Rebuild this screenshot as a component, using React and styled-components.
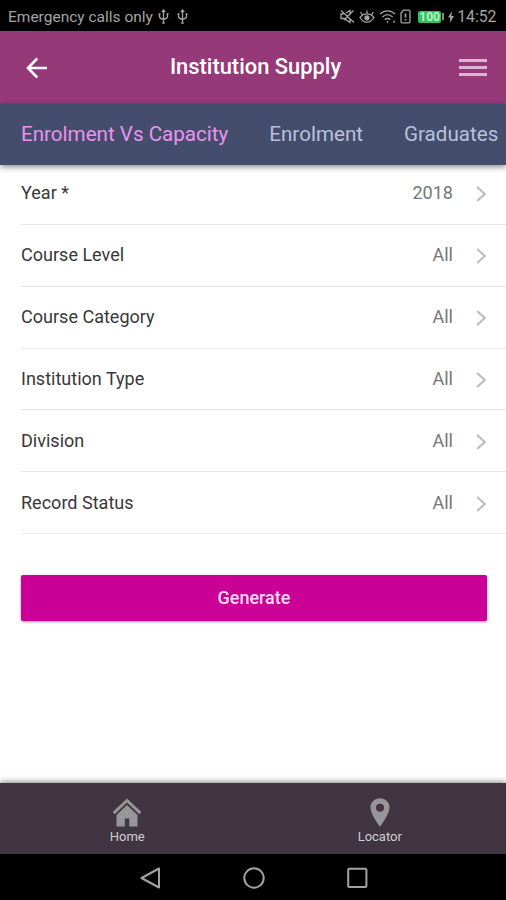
import React from "react";
import styled, { createGlobalStyle } from "styled-components";

const FILTERS = [
  { label: "Year *", value: "2018" },
  { label: "Course Level", value: "All" },
  { label: "Course Category", value: "All" },
  { label: "Institution Type", value: "All" },
  { label: "Division", value: "All" },
  { label: "Record Status", value: "All" },
];

const TABS = ["Enrolment Vs Capacity", "Enrolment", "Graduates"];

const UsbIcon = () => (
  <StatusSvg width="11" height="16" viewBox="0 0 11 16">
    <path d="M5.5 1v13M3.8 3l1.7-2 1.7 2M1.5 4.5v3.2c0 1.4 1.2 2 4 2.6 2.8-.6 4-1.2 4-2.6V4.5M.5 5h2M8.5 5h2M4.3 14h2.4" />
  </StatusSvg>
);

const MuteIcon = () => (
  <StatusSvg width="15" height="15" viewBox="0 0 15 15">
    <path d="M3.5 5H1v4.5h3L10 13.5V10M6 4l4-2.500V6M1 1.5L14 13.5M13.5 1.5L4 11" />
  </StatusSvg>
);

const EyeIcon = () => (
  <StatusSvg width="16" height="15" viewBox="0 0 16 15">
    <path d="M1 8.5C3 5.8 5.5 4.8 8 4.8s5 1 7 3.7c-2 3.2-4.5 4.7-7 4.7s-5-1.5-7-4.700zM8 1.5v3M1.5 3l2 3M14.5 3l-2 3" />
    <circle cx="8" cy="8.8" r="2" fill="#a4a4a4" />
  </StatusSvg>
);

const WifiIcon = () => (
  <StatusSvg width="17" height="15" viewBox="0 0 17 15">
    <path d="M1 5c4.5-4.3 10.5-4.3 15 0M3.3 8c3.2-3 7.2-3 10.4 0M5.7 10.700c1.7-1.5 3.9-1.5 5.6 0M8.5 12v2M15 11.5v2.500" />
  </StatusSvg>
);

const SimIcon = () => (
  <StatusSvg width="11" height="15" viewBox="0 0 11 15">
    <path d="M3.5 1.2H9c.6 0 1 .4 1 1v10.6c0 .6-.4 1-1 1H2c-.6 0-1-.4-1-1V4z" />
    <path d="M5.5 4.5v4M5.5 10v1.5" strokeWidth="1.7" />
  </StatusSvg>
);

const BoltIcon = () => (
  <svg width="6" height="12" viewBox="0 0 6 12">
    <path d="M4 0L0 6.5h2.4L1.8 12 6 5H3.4z" fill="#a4a4a4" />
  </svg>
);

const BackIcon = () => (
  <svg width="22" height="22" viewBox="0 0 22 22" fill="none">
    <path d="M11.2 1.5L2 11l9.2 9.5M2 11h19" stroke="#fff" strokeWidth="2.6" />
  </svg>
);

const HomeIcon = () => (
  <svg width="30" height="29" viewBox="0 0 30 29">
    <path d="M15 .5L29.3 14l-1.9 2.2L15 4.5 2.6 16.2.7 14z" fill="#97959a" />
    <path d="M15 7l10.5 10v11.5h-8.3V20.5h-4.4v8H4.5V17z" fill="#97959a" />
  </svg>
);

const PinIcon = () => (
  <svg width="20" height="29" viewBox="0 0 20 29">
    <path
      d="M10 .3C4.6.3.5 4.3.5 9.5.5 16.3 10 28.7 10 28.7s9.5-12.4 9.5-19.2C19.5 4.3 15.4.3 10 .3zm0 5.400a4 4 0 1 1 0 8 4 4 0 0 1 0-8z"
      fill="#97959a"
      fillRule="evenodd"
    />
  </svg>
);

const App = () => {
  return (
    <Screen>
      <GlobalStyle />
      <StatusBar>
        <Carrier>Emergency calls only</Carrier>
        <UsbGroup>
          <UsbIcon />
          <UsbIcon />
        </UsbGroup>
        <StatusIcons>
          <MuteIcon />
          <EyeIcon />
          <WifiIcon />
          <SimIcon />
        </StatusIcons>
        <Battery>100</Battery>
        <BatteryTip />
        <BoltIcon />
        <Clock>14:52</Clock>
      </StatusBar>

      <Header>
        <IconButton aria-label="Back">
          <BackIcon />
        </IconButton>
        <Title>Institution Supply</Title>
        <MenuButton aria-label="Menu">
          <MenuLine />
          <MenuLine />
          <MenuLine />
        </MenuButton>
      </Header>

      <Tabs>
        {TABS.map((tab, index) => (
          <Tab key={tab} $active={index === 0}>
            {tab}
          </Tab>
        ))}
      </Tabs>

      <Content>
        <FilterList>
          {FILTERS.map(({ label, value }) => (
            <FilterRow key={label}>
              <Label>{label}</Label>
              <Value>{value}</Value>
              <Chevron width="11" height="16" viewBox="0 0 11 16">
                <path d="M1.2 1l7.5 7-7.5 7" />
              </Chevron>
            </FilterRow>
          ))}
        </FilterList>
        <GenerateButton>Generate</GenerateButton>
      </Content>

      <Footer>
        <FooterItem>
          <HomeIcon />
          <FooterLabel>Home</FooterLabel>
        </FooterItem>
        <FooterItem>
          <PinIcon />
          <FooterLabel>Locator</FooterLabel>
        </FooterItem>
      </Footer>

      <SystemNav>
        <svg width="22" height="24" viewBox="0 0 22 24">
          <path d="M20 2.500v19L2.500 12z" />
        </svg>
        <svg width="24" height="24" viewBox="0 0 24 24">
          <circle cx="12" cy="12" r="9.7" />
        </svg>
        <svg width="22" height="24" viewBox="0 0 22 24">
          <rect x="1.2" y="2.7" width="18.2" height="18.2" rx="1" />
        </svg>
      </SystemNav>
    </Screen>
  );
};

export default App;

const GlobalStyle = createGlobalStyle`
  * {
    box-sizing: border-box;
  }

  body {
    margin: 0;
    font-family: Roboto, "Liberation Sans", sans-serif;
  }

  button {
    border: 0;
    padding: 0;
    background: none;
    font-family: inherit;
  }

  svg {
    display: block;
    flex-shrink: 0;
  }
`;

const Screen = styled.div`
  display: flex;
  flex-direction: column;
  width: 506px;
  height: 900px;
  overflow: hidden;
  background: #fff;
`;

const StatusBar = styled.div`
  display: flex;
  align-items: center;
  flex-shrink: 0;
  height: 31px;
  padding: 2px 9.5px 0 8px;
  background: #000;
  color: #a4a4a4;
`;

const StatusSvg = styled.svg`
  fill: none;
  stroke: #a4a4a4;
  stroke-width: 1.3;
`;

const Carrier = styled.span`
  font-size: 15.5px;
  white-space: nowrap;
`;

const UsbGroup = styled.div`
  display: flex;
  gap: 8px;
  margin-left: 5px;
`;

const StatusIcons = styled.div`
  display: flex;
  gap: 4px;
  margin-left: auto;
`;

const Battery = styled.span`
  width: 23px;
  height: 12px;
  margin-left: 7px;
  border-radius: 2px;
  background: #2fc45c;
  color: #b9f5c9;
  font-size: 12px;
  font-weight: 700;
  line-height: 12px;
  text-align: center;
`;

const BatteryTip = styled.span`
  width: 2px;
  height: 7px;
  margin: 0 4px 0 1px;
  background: #8a8a8a;
`;

const Clock = styled.span`
  margin-left: 3px;
  font-size: 15.8px;
`;

const Header = styled.header`
  display: flex;
  align-items: center;
  justify-content: space-between;
  flex-shrink: 0;
  height: 73px;
  padding: 0 19px 0 26px;
  background: #953979;
`;

const IconButton = styled.button`
  width: 26px;
`;

const Title = styled.h1`
  margin: 0;
  padding-bottom: 2px;
  color: #fff;
  font-size: 21.9px;
  font-weight: 500;
`;

const MenuButton = styled.button`
  display: flex;
  flex-direction: column;
  gap: 4px;
  width: 28px;
`;

const MenuLine = styled.span`
  height: 3px;
  background: #dcb3d0;
`;

const Tabs = styled.nav`
  display: flex;
  gap: 41px;
  position: relative;
  flex-shrink: 0;
  height: 61px;
  padding: 0 0 2px 21px;
  background: #454d6d;
  box-shadow: 0 2px 6px rgba(0, 0, 0, 0.45);
`;

const Tab = styled.button`
  color: ${({ $active }) => ($active ? "#e993ee" : "#b6c2dc")};
  font-size: 20.6px;
  white-space: nowrap;
`;

const Content = styled.main`
  flex: 1;
`;

const FilterList = styled.ul`
  margin: 0;
  padding: 0 0 0 21px;
  list-style: none;
`;

const FilterRow = styled.li`
  display: flex;
  align-items: center;
  height: 61.8px;
  padding: 0 19px 1px 0;
  border-bottom: 1px solid #e9e9e9;

  &:first-child {
    height: 60px;
    padding-bottom: 5px;
  }
`;

const Label = styled.span`
  flex: 1;
  color: #383838;
  font-size: 18.05px;
`;

const Value = styled.span`
  margin-right: 23px;
  color: #777;
  font-size: 18.05px;
`;

const Chevron = styled.svg`
  margin-top: 3px;
  fill: none;
  stroke: #bdbdbd;
  stroke-width: 2.2;
`;

const GenerateButton = styled.button`
  display: block;
  width: 466px;
  height: 46px;
  margin: 41px 0 0 21px;
  border-radius: 2px;
  background: #ca0097;
  box-shadow: 0 1px 3px rgba(0, 0, 0, 0.4);
  color: #fbdcf3;
  font-size: 18px;
  font-weight: 500;
`;

const Footer = styled.footer`
  display: flex;
  position: relative;
  flex-shrink: 0;
  height: 71px;
  padding-left: 1px;
  background: #413541;
  box-shadow: 0 -1px 6px rgba(0, 0, 0, 0.5);
`;

const FooterItem = styled.div`
  display: flex;
  flex: 1;
  flex-direction: column;
  align-items: center;
  padding-top: 15px;
`;

const FooterLabel = styled.span`
  margin-top: 2px;
  color: #d0cdd2;
  font-size: 13px;
  line-height: 15px;
`;

const SystemNav = styled.div`
  display: flex;
  align-items: center;
  justify-content: center;
  gap: 81px;
  position: relative;
  flex-shrink: 0;
  height: 46px;
  padding: 1px 0 0 1px;
  background: #000;

  svg {
    fill: none;
    stroke: #a3a3a3;
    stroke-width: 2;
    stroke-linejoin: round;
  }
`;
